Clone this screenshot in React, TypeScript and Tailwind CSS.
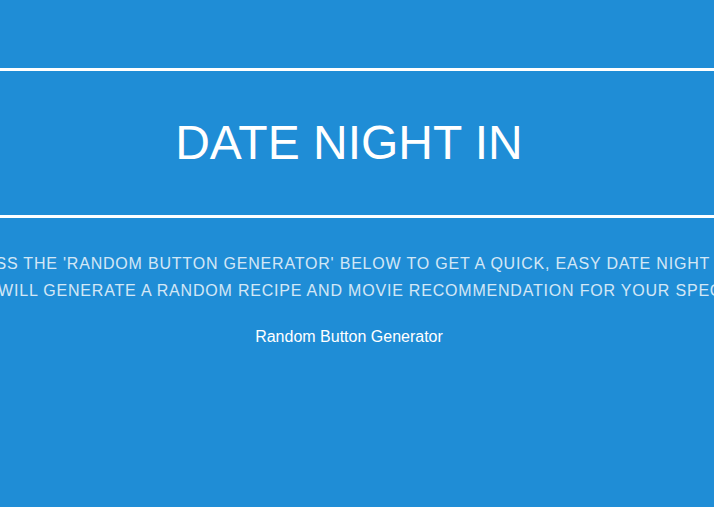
export default function App() {
  return (
    <main className="flex min-h-screen flex-col items-center overflow-hidden bg-[#1f8dd6] pt-[68px] font-['Liberation_Sans',Arial,sans-serif] text-white">
      <h1 className="w-full border-y-[3px] border-white py-9 pr-4 text-center text-5xl leading-[72px]">
        DATE NIGHT IN
      </h1>
      <p className="mt-8 flex w-full flex-col items-center pr-4 text-base leading-[27px] tracking-wider whitespace-nowrap opacity-80">
        <span>PRESS THE 'RANDOM BUTTON GENERATOR' BELOW TO GET A QUICK, EASY DATE NIGHT IN.</span>
        <span>THAT WILL GENERATE A RANDOM RECIPE AND MOVIE RECOMMENDATION FOR YOUR SPECIAL</span>
      </p>
      <button type="button" className="mt-5 mr-4 text-base leading-[26px]">
        Random Button Generator
      </button>
    </main>
  );
}
